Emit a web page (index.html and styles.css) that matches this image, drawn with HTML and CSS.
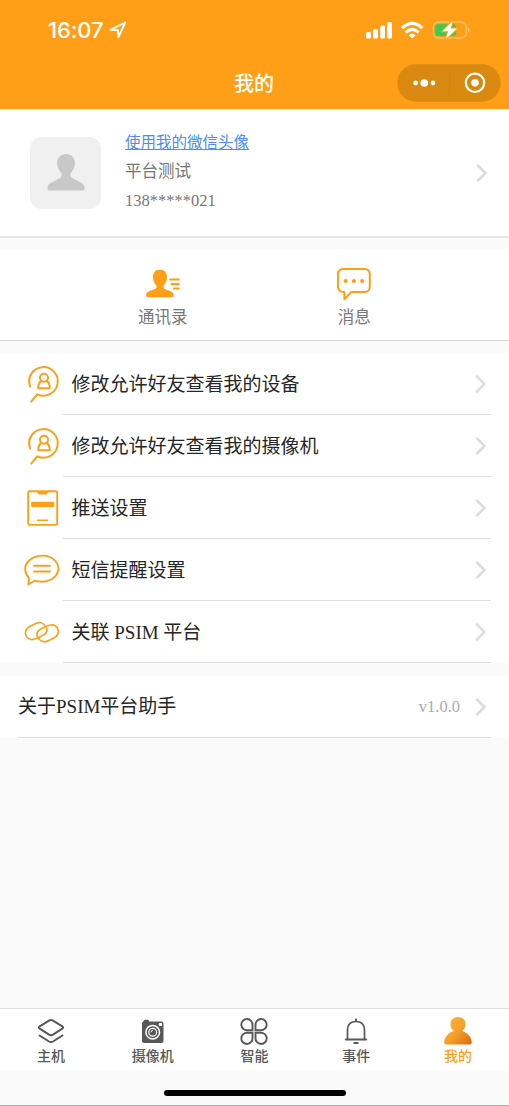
FILE: index.html
```html
<!DOCTYPE html>
<html lang="zh-CN">
<head>
<meta charset="utf-8">
<title>我的</title>
<link rel="stylesheet" href="styles.css">
</head>
<body>
<svg class="defs" width="0" height="0">
  <symbol id="chevron" viewBox="0 0 12 20"><path d="M2 2.500l7.500 7.500L2 17.500" fill="none" stroke="#dcdcdc" stroke-width="2.500" stroke-linecap="round"/></symbol>
  <symbol id="friend" viewBox="0 0 36 40"><g fill="none" stroke="#ff9f17" stroke-width="2" stroke-linecap="round"><path d="M4.100 22.500A14.300 14.300 0 1 1 11.300 30.300L5.200 37.600"/><circle cx="18" cy="13.800" r="4"/><path d="M15.400 17C12.900 18.300 12.200 20.400 12.200 24.300H23.800C23.800 20.400 23.100 18.300 20.600 17" stroke-linejoin="round"/></g></symbol>
</svg>
<div class="page">
  <header class="header">
    <div class="status">
      <div class="clock">16:07
        <svg width="18" height="18" viewBox="0 0 18 18"><path d="M1.500 8.800L16.200 1.500 9.400 16.200 9 9.300z" fill="none" stroke="#fff" stroke-width="1.900" stroke-linejoin="round"/></svg>
      </div>
      <svg class="signals" width="106" height="20" viewBox="0 0 106 20">
        <g fill="#fff"><rect x="1" y="12" width="5" height="6.500" rx="1.500"/><rect x="8" y="9" width="5" height="9.500" rx="1.500"/><rect x="15.200" y="5.500" width="4.800" height="13" rx="1.500"/><rect x="22.200" y="2" width="4.800" height="16.500" rx="1.500"/></g>
        <g fill="none" stroke="#fff" stroke-width="3"><path d="M37 8.200Q47.200-1.600 57.400 8.200"/><path d="M40.700 12.400Q47.200 6.200 53.700 12.400"/></g>
        <path d="M43.700 15.200Q47.200 12.300 50.700 15.200L47.200 18.600z" fill="#fff"/>
        <rect x="68.300" y="2" width="33" height="16" rx="5" fill="none" stroke="#ffc06a" stroke-width="1.300"/>
        <path d="M102.700 7.500q2 .5 2 2.500t-2 2.500z" fill="#ffc06a"/>
        <rect x="70.400" y="4.200" width="20.500" height="11.800" rx="2.500" fill="#31cf5a"/>
        <path d="M87.800.8L77.500 11.200h5.700L80.800 19 92 8.400h-6.400z" fill="#fff" stroke="#ff9f17" stroke-width="2.200" paint-order="stroke"/>
      </svg>
    </div>
    <div class="navbar">
      <h1 class="title">我的</h1>
      <svg class="capsule" width="104" height="38" viewBox="0 0 104 38">
        <rect x=".3" y=".3" width="103.400" height="37.400" rx="18.700" fill="#d9890f"/>
        <path d="M52.500 7.500v23" stroke="#cf8410"/>
        <g fill="#fff"><circle cx="18.600" cy="19" r="2.400"/><circle cx="27.300" cy="19" r="3.800"/><circle cx="36" cy="19" r="2.400"/><circle cx="78" cy="18.800" r="3.800"/></g>
        <circle cx="78" cy="18.800" r="9.200" fill="none" stroke="#fff" stroke-width="2.200"/>
      </svg>
    </div>
  </header>

  <section class="profile">
    <div class="avatar"><svg width="40" height="40" viewBox="0 0 40 40"><path d="M20 1C14.500 1 11 5 11 10.500c0 4 2 6.800 4 9.300 1.500 2.200.7 4-1.300 5.200L5.500 29.500Q1.500 31.500 1.500 34v2q0 1.500 1.500 1.500h34q1.500 0 1.500-1.500v-2q0-2.500-4-4.500L26.300 25c-2-1.200-2.800-3-1.300-5.200 2-2.500 4-5.300 4-9.300C29 5 25.500 1 20 1z" fill="#c8c8c8"/></svg></div>
    <div class="info">
      <a class="link">使用我的微信头像</a>
      <span class="name">平台测试</span>
      <span class="phone">138*****021</span>
    </div>
    <svg class="chevron"><use href="#chevron"/></svg>
  </section>

  <section class="shortcuts">
    <div class="shortcut">
      <svg width="36" height="36" viewBox="0 0 36 36"><path d="M15 2.500C10.500 2.500 8 5.500 8 10c0 3.800 1.500 6.500 3.300 8.500.9 1.700.2 2.700-1.300 3.500L4.500 24Q1 25.500 1 28.500q0 1.700 2 1.700H26.700q2 0 2-1.700 0-3-3.500-4.500L20 22c-1.500-.8-2.200-1.800-1.300-3.500C20.500 16.500 22 13.800 22 10c0-4.500-2.500-7.500-7-7.500z" fill="#ff9f17"/><path d="M25.200 12.500h8.500M26.700 17.200h7M29 21.500h4.700" stroke="#ff9f17" stroke-width="2.200" stroke-linecap="round"/></svg>
      <span>通讯录</span>
    </div>
    <div class="shortcut">
      <svg width="36" height="36" viewBox="0 0 36 36"><path d="M7.500 2H28.500Q33.800 2 33.800 7.500V19.500Q33.800 25 28.500 25H15.200L8.400 32.200V25H7.500Q2 25 2 19.500V7.500Q2 2 7.500 2z" fill="none" stroke="#ff9f17" stroke-width="2" stroke-linejoin="round"/><g fill="#ff9f17"><circle cx="9.600" cy="14" r="2.100"/><circle cx="17.900" cy="14" r="2.100"/><circle cx="26.200" cy="14" r="2.100"/></g></svg>
      <span>消息</span>
    </div>
  </section>

  <section class="list">
    <div class="row"><svg class="icon" viewBox="0 0 36 40"><use href="#friend" width="36" height="40" x="2"/></svg><div class="body"><span>修改允许好友查看我的设备</span><svg class="chevron"><use href="#chevron"/></svg></div></div>
    <div class="row"><svg class="icon" viewBox="0 0 36 40"><use href="#friend" width="36" height="40" x="2"/></svg><div class="body"><span>修改允许好友查看我的摄像机</span><svg class="chevron"><use href="#chevron"/></svg></div></div>
    <div class="row"><svg class="icon" viewBox="0 0 36 40"><rect x="4.200" y="3.300" width="29" height="33.600" rx="1.500" fill="none" stroke="#ff9f17" stroke-width="1.900"/><path d="M13 3.500h11.500q-.5 3-3 3h-5.500q-2.500 0-3-3zM8 13.700h21.500q.8 0 .8.800v3.800q0 .8-.8.800H8q-.8 0-.8-.8v-3.800q0-.8.8-.8z" fill="#ff9f17"/><path d="M13.500 32.200h10" stroke="#ff9f17" stroke-width="1.500" stroke-linecap="round"/></svg><div class="body"><span>推送设置</span><svg class="chevron"><use href="#chevron"/></svg></div></div>
    <div class="row"><svg class="icon" viewBox="0 0 36 40"><g fill="none" stroke="#ff9f17" stroke-width="1.900" stroke-linejoin="round" stroke-linecap="round"><path d="M5 28C.5 23.500-.3 16.500 4.200 11.500 11.500 3.800 25 3.800 31.500 11c5 6 3.300 13.500-3.500 18-5 3-11.500 3.300-17.500 1.700L4.400 34.500z"/><path d="M10 15.700h16M10 21.500h16"/></g></svg><div class="body"><span>短信提醒设置</span><svg class="chevron"><use href="#chevron"/></svg></div></div>
    <div class="row"><svg class="icon" viewBox="0 0 36 40"><g fill="none" stroke="#ff9f17" stroke-width="1.700" stroke-linecap="round"><path d="M21 14.200C19.300 10.500 15.500 9.800 12.200 11.300L5.800 14.400C-.8 18 .7 26.700 7.300 27.500c2.800.3 4.700-.8 7.200-2L19 23.200c3-1.600 4.500-4 3.600-7"/><path d="M14.700 26.200c2 3.700 5.800 4.300 9 2.800l6.300-3.100c6.600-3.600 5.100-12.300-1.500-13.100-2.800-.3-4.700.8-7.200 2l-4.500 2.300c-3 1.600-4.500 4-3.600 7"/></g></svg><div class="body"><span>关联 PSIM 平台</span><svg class="chevron"><use href="#chevron"/></svg></div></div>
  </section>

  <section class="about">
    <div class="body"><span>关于PSIM平台助手</span><span class="version">v1.0.0</span><svg class="chevron"><use href="#chevron"/></svg></div>
  </section>

  <nav class="tabs">
    <div class="tab"><svg width="30" height="30" viewBox="0 0 30 30"><g fill="none" stroke="#585858" stroke-width="2" stroke-linejoin="round" stroke-linecap="round"><path d="M13 3.600Q15 2.400 17 3.600L26.300 9.400Q28 10.500 26.300 11.600L17 17.600Q15 18.800 13 17.600L3.700 11.600Q2 10.500 3.700 9.400z"/><path d="M3.500 18.500L13 24.500Q15 25.700 17 24.500L26.500 18.500"/></g></svg><span>主机</span></div>
    <div class="tab"><svg width="30" height="30" viewBox="0 0 30 30"><path d="M5.500 4.500Q5.500 2.700 7 2.700h2.500Q11 2.700 11.200 4.500H23.500q2 0 2 2V24q0 2-2 2H6q-2 0-2-2V6.500q0-1.500 1.500-2z" fill="#585858"/><circle cx="14.700" cy="15.200" r="6.800" fill="none" stroke="#fff" stroke-width="1.500"/><circle cx="14.700" cy="15.200" r="3.900" fill="none" stroke="#fff" stroke-width="1.200"/><path d="M13 15.200q.2-1.600 1.800-1.800" fill="none" stroke="#fff"/><rect x="20.800" y="6" width="3.300" height="3" rx="1" fill="#fff"/></svg><span>摄像机</span></div>
    <div class="tab"><svg width="30" height="30" viewBox="0 0 30 30"><g fill="none" stroke="#585858" stroke-width="1.900"><path id="petal" d="M13.500 13.200H8.500A5.600 5.600 0 1 1 13.500 8z"/><use href="#petal" transform="matrix(-1 0 0 1 30 0)"/><use href="#petal" transform="matrix(1 0 0 -1 0 29)"/><use href="#petal" transform="matrix(-1 0 0 -1 30 29)"/></g></svg><span>智能</span></div>
    <div class="tab"><svg width="30" height="30" viewBox="0 0 30 30"><g fill="none" stroke="#585858" stroke-width="1.700" stroke-linecap="round"><path d="M6.500 22.300V13Q6.700 4.500 15 4.500T23.500 13V22.300"/><path d="M4.800 22.500h20.400M13.200 26h3.600M15 2.500v1.500" stroke-width="2"/></g></svg><span>事件</span></div>
    <div class="tab active"><svg width="30" height="30" viewBox="0 0 30 30"><defs><linearGradient id="person" x1="0" y1="0" x2="1" y2="1"><stop offset="0" stop-color="#ffb72b"/><stop offset=".5" stop-color="#f6a02b"/><stop offset="1" stop-color="#dd6910"/></linearGradient></defs><path d="M15 0C10.500 0 7.500 3 7.500 7.300c0 3 1.500 5.200 3.300 6.700C5.500 16 1.200 20 1.200 25.500q0 2 2 2H26.800q2 0 2-2c0-5.500-4.300-9.500-9.600-11.500C21 12.500 22.500 10.300 22.500 7.300c0-4.300-3-7.300-7.500-7.300z" fill="url(#person)"/></svg><span>我的</span></div>
  </nav>
  <footer class="home"><div class="indicator"></div></footer>
</div>
</body>
</html>
```

FILE: styles.css
```css
* { box-sizing: border-box; }
body {
  margin: 0;
  background: #fafafa;
  color: #262626;
  font-family: "Liberation Serif", "Noto Sans CJK SC", serif;
}
svg { display: block; flex: none; }
.defs { position: absolute; }
.page { height: 1106px; display: flex; flex-direction: column; }

.header { height: 108.500px; flex: none; background: #ff9f17; color: #fff; }
.status {
  height: 60px;
  padding: 0 38px 0 48px;
  display: flex;
  align-items: center;
  justify-content: space-between;
}
.clock {
  display: flex;
  align-items: center;
  gap: 5px;
  font: 500 22px Inter, sans-serif;
  letter-spacing: -.1px;
}
.navbar {
  height: 46px;
  padding-right: 8px;
  display: grid;
  grid-template-columns: 112px 1fr 104px;
  align-items: center;
}
.title {
  grid-column: 2;
  margin: 0 1px 0 0;
  text-align: center;
  font: 500 20px/28px "Noto Sans CJK SC", sans-serif;
}
.capsule { grid-column: 3; }

.profile {
  height: 129.500px;
  flex: none;
  padding: 2px 21px 0 30px;
  display: flex;
  align-items: center;
  background: #fff;
  border-bottom: 2px solid #e6e6e6;
}
.avatar {
  width: 71px;
  height: 72px;
  flex: none;
  border-radius: 12px;
  background: #f0f0f0;
  display: flex;
  align-items: center;
  justify-content: center;
}
.info {
  flex: 1;
  margin: -3px 0 0 24px;
  display: flex;
  flex-direction: column;
  font-size: 16.500px;
  line-height: 29px;
  color: #777;
}
.info .link { font-size: 15.500px; color: #4b8df8; text-decoration: underline; }
.chevron { width: 12px; height: 20px; }

.shortcuts {
  height: 92px;
  flex: none;
  margin-top: 11px;
  padding: 17.500px 59px 0 67px;
  display: flex;
  background: #fff;
  border-bottom: 1px solid #d2d2d2;
}
.shortcut {
  flex: 1;
  display: flex;
  flex-direction: column;
  align-items: center;
  font-size: 16.500px;
  line-height: 24px;
  color: #777;
  gap: 3.500px;
}

.list { margin-top: 12px; flex: none; background: #fff; }
.row { height: 62.100px; padding: 0 18px 0 24px; display: flex; align-items: center; }
.row .icon { width: 36px; height: 40px; }
.row .body { margin-left: 3px; padding-left: 8.500px; }
.body {
  flex: 1;
  height: 100%;
  padding: 2px 4px 0 0;
  display: flex;
  align-items: center;
  justify-content: space-between;
  border-bottom: 1.500px solid #dedede;
  font-size: 19px;
  line-height: 28px;
}
.body .chevron { margin-top: -1px; }
.about { height: 62px; flex: none; margin-top: 12.500px; padding: 0 18px; background: #fff; }
.version { margin: 0 15px 0 auto; color: #aaa; font-size: 16.500px; }

.tabs {
  height: 63px;
  flex: none;
  margin-top: auto;
  padding-top: 8px;
  display: flex;
  background: #fff;
  border-top: 1px solid #dedede;
}
.tab {
  flex: 1;
  display: flex;
  flex-direction: column;
  align-items: center;
  color: #585858;
  font: 500 14px/20px "Noto Sans CJK SC", sans-serif;
}
.tab span { margin-top: -2px; }
.active { color: #ff9f17; }
.home {
  height: 35.500px;
  flex: none;
  padding-top: 19.500px;
  border-bottom: 1px solid #93c79d;
}
.indicator { width: 182px; height: 6px; margin: 0 auto; border-radius: 3px; background: #000; }
```
